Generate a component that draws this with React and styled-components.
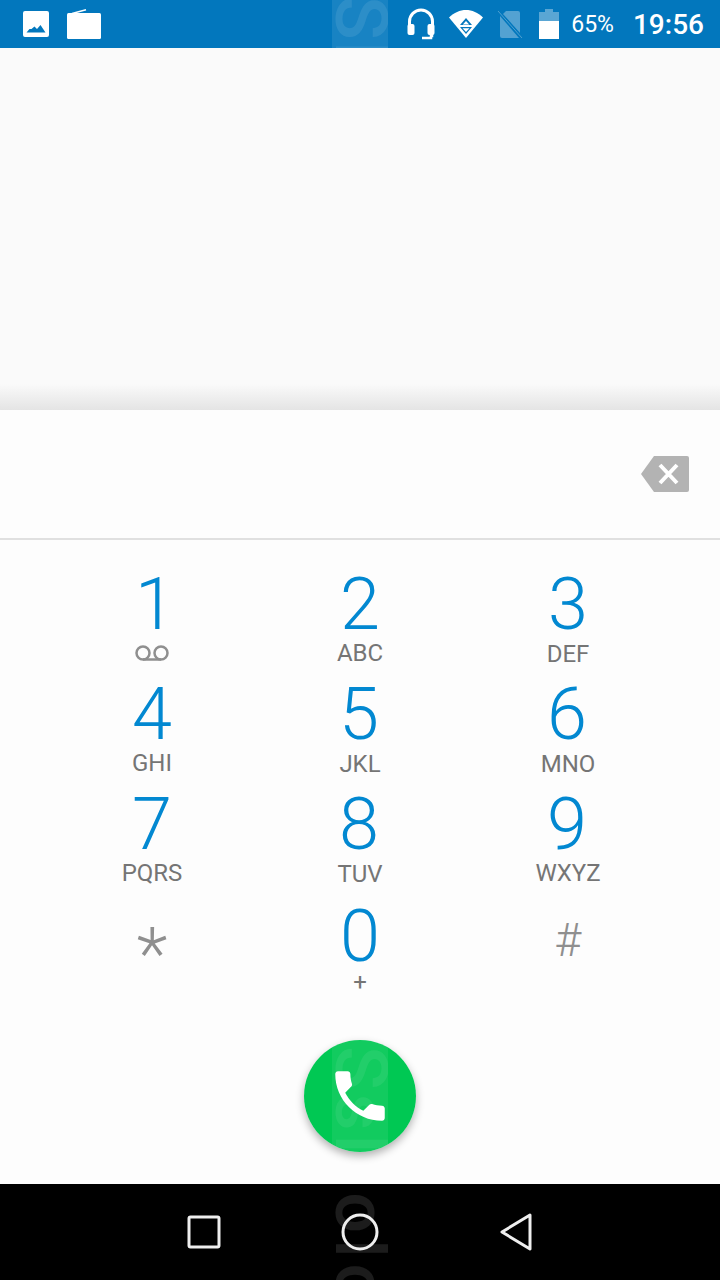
import React from 'react';
import styled, { createGlobalStyle } from 'styled-components';

const GlobalStyle = createGlobalStyle`
  html, body {
    margin: 0;
    padding: 0;
    background: #fafafa;
  }
  * {
    box-sizing: border-box;
  }
`;

const Screen = styled.div`
  position: relative;
  width: 720px;
  height: 1280px;
  display: flex;
  flex-direction: column;
  overflow: hidden;
  background: #fafafa;
  font-family: Roboto, 'Noto Sans', sans-serif;
`;

const StatusBar = styled.div`
  position: relative;
  height: 48px;
  flex: none;
  display: flex;
  align-items: center;
  justify-content: space-between;
  padding: 0 16px 0 23px;
  background: #0277bd;
  color: #fff;
`;

const StatusGroup = styled.div`
  display: flex;
  align-items: center;
  gap: ${(props) => props.$gap || 0}px;
`;

const Spacer = styled.span`
  width: ${(props) => props.$width}px;
`;

const BatteryText = styled.span`
  font-size: 23px;
  margin-left: 12px;
  margin-right: 19px;
`;

const Clock = styled.span`
  font-size: 28px;
  font-weight: 500;
`;

const RecentArea = styled.div`
  height: 362px;
  flex: none;
  background: linear-gradient(to bottom, #fafafa 0, #fafafa 336px, #e4e4e4 362px);
`;

const DialPad = styled.div`
  flex: 1;
  display: flex;
  flex-direction: column;
  background: #fdfdfd;
`;

const NumberField = styled.div`
  height: 130px;
  flex: none;
  display: flex;
  align-items: center;
  justify-content: flex-end;
  padding-right: 31px;
  border-bottom: 2px solid #e0e0e0;
`;

const KeyGrid = styled.div`
  display: grid;
  grid-template-columns: 208px 208px 208px;
  grid-auto-rows: 110px;
  justify-content: center;
  padding-top: 30px;
`;

const Key = styled.div`
  display: flex;
  flex-direction: column;
  align-items: center;
`;

const Digit = styled.span`
  font-size: 72px;
  line-height: 70px;
  height: 70px;
  font-weight: 300;
  color: #0288d1;
  margin-top: ${(props) => props.$down || 0}px;
  margin-left: ${(props) => props.$right || 0}px;
`;

const Letters = styled.span`
  font-size: 24px;
  line-height: 26px;
  color: #757575;
  margin-top: ${(props) => props.$down || 0}px;
`;

const Voicemail = styled.span`
  display: flex;
  margin-top: 5px;
`;

const Symbol = styled.span`
  color: #8f8f8f;
  font-weight: 300;
  font-size: ${(props) => props.$size}px;
  line-height: 70px;
  height: 70px;
  margin-top: ${(props) => props.$down}px;
`;

const CallRow = styled.div`
  flex: 1;
  display: flex;
  justify-content: center;
  padding-top: 30px;
`;

const CallShadow = styled.div`
  width: 112px;
  height: 112px;
  border-radius: 50%;
  box-shadow: 0 4px 8px rgba(0, 0, 0, 0.3);
`;

const CallButton = styled.div`
  position: relative;
  width: 112px;
  height: 112px;
  border-radius: 50%;
  overflow: hidden;
  display: flex;
  align-items: center;
  justify-content: center;
  background: #00c853;
`;

const NavBar = styled.div`
  position: relative;
  height: 96px;
  flex: none;
  display: flex;
  align-items: center;
  justify-content: center;
  gap: 120px;
  background: #000;
`;

const NavIcon = styled.svg`
  position: relative;
  fill: none;
  stroke: #eee;
  stroke-width: 3;
  stroke-linejoin: round;
`;

// the faint vertical stamp that runs down the middle of the capture
const Watermark = styled.div`
  position: absolute;
  left: ${(props) => props.$left}px;
  top: 0;
  bottom: 0;
  width: 56px;
  overflow: hidden;
  display: flex;
  justify-content: center;
  background: ${(props) => props.$bg || 'transparent'};
`;

const WatermarkText = styled.span`
  writing-mode: vertical-rl;
  font-size: 72px;
  line-height: 56px;
  height: 300px;
  font-weight: 500;
  white-space: nowrap;
  letter-spacing: ${(props) => props.$spacing || 0}px;
  color: ${(props) => props.$color};
  margin-top: ${(props) => props.$down}px;
`;

const PhoneGlyph = styled.span`
  position: relative;
  display: flex;
`;

const PictureIcon = () => (
  <svg width="26" height="26" viewBox="0 0 26 26">
    <path
      fillRule="evenodd"
      fill="#fff"
      d="M2 0h22a2 2 0 0 1 2 2v22a2 2 0 0 1-2 2H2a2 2 0 0 1-2-2V2a2 2 0 0 1 2-2zM3.500 21.500h19l-5-7.500-3.500 4-2.500-2.500-3 2.500-2 0z"
    />
  </svg>
);

const RadioIcon = () => (
  <svg width="34" height="30" viewBox="0 0 34 30">
    <path d="M5 4.500L19 .8" stroke="#fff" strokeWidth="1.500" />
    <rect x="0" y="4" width="34" height="26" rx="1.500" fill="#fff" />
  </svg>
);

const HeadsetIcon = () => (
  <svg width="28" height="32" viewBox="0 0 28 32" fill="none">
    <path d="M2.500 21V13.500a11.500 11.500 0 0 1 23 0V21" stroke="#fff" strokeWidth="3" />
    <rect x="0.500" y="16" width="7" height="11" rx="2" fill="#fff" />
    <rect x="20.500" y="16" width="7" height="11" rx="2" fill="#fff" />
    <path d="M25 25v3h-1v2H15" stroke="#fff" strokeWidth="2.500" />
  </svg>
);

const WifiIcon = () => (
  <svg width="34" height="30" viewBox="0 0 34 30">
    <path fill="#fff" d="M0 8.500C10-1.500 24-1.500 34 8.500L17 29z" />
    <path fill="#0277bd" d="M17 9l6 7H11zM11 18h12l-6 7z" />
    <path fill="#fff" d="M17 12l3.200 3.500h-6.400zM13.500 19.200h7L17 23z" />
  </svg>
);

const NoSimIcon = () => (
  <svg width="26" height="30" viewBox="0 0 26 30">
    <path fill="#fff" opacity="0.32" d="M9 2h12a2 2 0 0 1 2 2v20L6 5z" />
    <path fill="#fff" opacity="0.32" d="M3 7l19 22H5a2 2 0 0 1-2-2z" />
    <path d="M1 2l24 27" stroke="#fff" strokeWidth="1" opacity="0.3" />
  </svg>
);

const BatteryIcon = () => (
  <svg width="20" height="30" viewBox="0 0 20 30">
    <path fill="#fff" opacity="0.35" d="M6 0h8v3h6v10H0V3h6z" />
    <rect x="0" y="12" width="20" height="18" fill="#fff" />
  </svg>
);

const BackspaceIcon = () => (
  <svg width="48" height="36" viewBox="0 0 48 36">
    <path fill="#b3b3b3" d="M13 0h33a2 2 0 0 1 2 2v32a2 2 0 0 1-2 2H13L0 18z" />
    <path d="M19 9l17 18M36 9L19 27" stroke="#fff" strokeWidth="4" />
  </svg>
);

const VoicemailIcon = () => (
  <svg width="34" height="16" viewBox="0 0 34 16" fill="none">
    <circle cx="8" cy="8" r="6.500" stroke="#8f8f8f" strokeWidth="2.500" />
    <circle cx="26" cy="8" r="6.500" stroke="#8f8f8f" strokeWidth="2.500" />
    <path d="M8 14.500h18" stroke="#8f8f8f" strokeWidth="2.500" />
  </svg>
);

const PhoneIcon = () => (
  <svg width="66" height="66" viewBox="0 0 24 24">
    <path
      fill="#fff"
      d="M6.620 10.790c1.440 2.830 3.760 5.140 6.590 6.590l2.200-2.200c.27-.27.67-.36 1.020-.24 1.120.37 2.330.57 3.570.57.550 0 1 .45 1 1V20c0 .55-.45 1-1 1-9.390 0-17-7.610-17-17 0-.55.450-1 1-1h3.500c.55 0 1 .45 1 1 0 1.250.2 2.450.57 3.570.11.350.03.740-.25 1.020l-2.200 2.200z"
    />
  </svg>
);

const keys = [
  { digit: '1', voicemail: true, right: 6 },
  { digit: '2', letters: 'ABC' },
  { digit: '3', letters: 'DEF', lettersDown: 1 },
  { digit: '4', letters: 'GHI' },
  { digit: '5', letters: 'JKL', lettersDown: 1, right: -2 },
  { digit: '6', letters: 'MNO', lettersDown: 1, right: -2 },
  { digit: '7', letters: 'PQRS' },
  { digit: '8', letters: 'TUV', lettersDown: 1, right: -2 },
  { digit: '9', letters: 'WXYZ', right: -2 },
  { symbol: '*', size: 72, down: 20 },
  { digit: '0', letters: '+', down: 2, lettersDown: -3 },
  { symbol: '#', size: 46, down: 5 },
];

const App = () => {
  return (
    <Screen>
      <GlobalStyle />
      <StatusBar>
        <StatusGroup $gap={18}>
          <PictureIcon />
          <RadioIcon />
        </StatusGroup>
        <Watermark $left={332} $bg="rgba(255,255,255,0.09)">
          <WatermarkText $color="rgba(255,255,255,0.09)" $down={-4} $spacing={2}>Sl</WatermarkText>
        </Watermark>
        <StatusGroup>
          <HeadsetIcon />
          <Spacer $width={14} />
          <WifiIcon />
          <Spacer $width={14} />
          <NoSimIcon />
          <Spacer $width={16} />
          <BatteryIcon />
          <BatteryText>65%</BatteryText>
          <Clock>19:56</Clock>
        </StatusGroup>
      </StatusBar>
      <RecentArea />
      <DialPad>
        <NumberField>
          <BackspaceIcon />
        </NumberField>
        <KeyGrid>
          {keys.map((key) => (
            <Key key={key.digit || key.symbol}>
              {key.digit ? (
                <Digit $down={key.down} $right={key.right}>{key.digit}</Digit>
              ) : (
                <Symbol $size={key.size} $down={key.down}>{key.symbol}</Symbol>
              )}
              {key.voicemail && (
                <Voicemail>
                  <VoicemailIcon />
                </Voicemail>
              )}
              {key.letters && <Letters $down={key.lettersDown}>{key.letters}</Letters>}
            </Key>
          ))}
        </KeyGrid>
        <CallRow>
          <CallShadow>
            <CallButton>
              <PhoneGlyph>
                <PhoneIcon />
              </PhoneGlyph>
              <Watermark $left={28} $bg="rgba(255,255,255,0.07)">
                <WatermarkText $color="rgba(255,255,255,0.07)" $down={6} $spacing={4}>Ssl</WatermarkText>
              </Watermark>
            </CallButton>
          </CallShadow>
        </CallRow>
      </DialPad>
      <NavBar>
        <Watermark $left={332}>
          <WatermarkText $color="rgba(255,255,255,0.11)" $down={-16} $spacing={6}>lolo</WatermarkText>
        </Watermark>
        <NavIcon width="34" height="34" viewBox="0 0 34 34">
          <rect x="2" y="2" width="30" height="30" rx="1.500" />
        </NavIcon>
        <NavIcon width="38" height="38" viewBox="0 0 38 38">
          <circle cx="19" cy="19" r="17" />
        </NavIcon>
        <NavIcon width="34" height="38" viewBox="0 0 34 38">
          <path d="M31 2L3 19l28 17z" />
        </NavIcon>
      </NavBar>
    </Screen>
  );
};

export default App;
